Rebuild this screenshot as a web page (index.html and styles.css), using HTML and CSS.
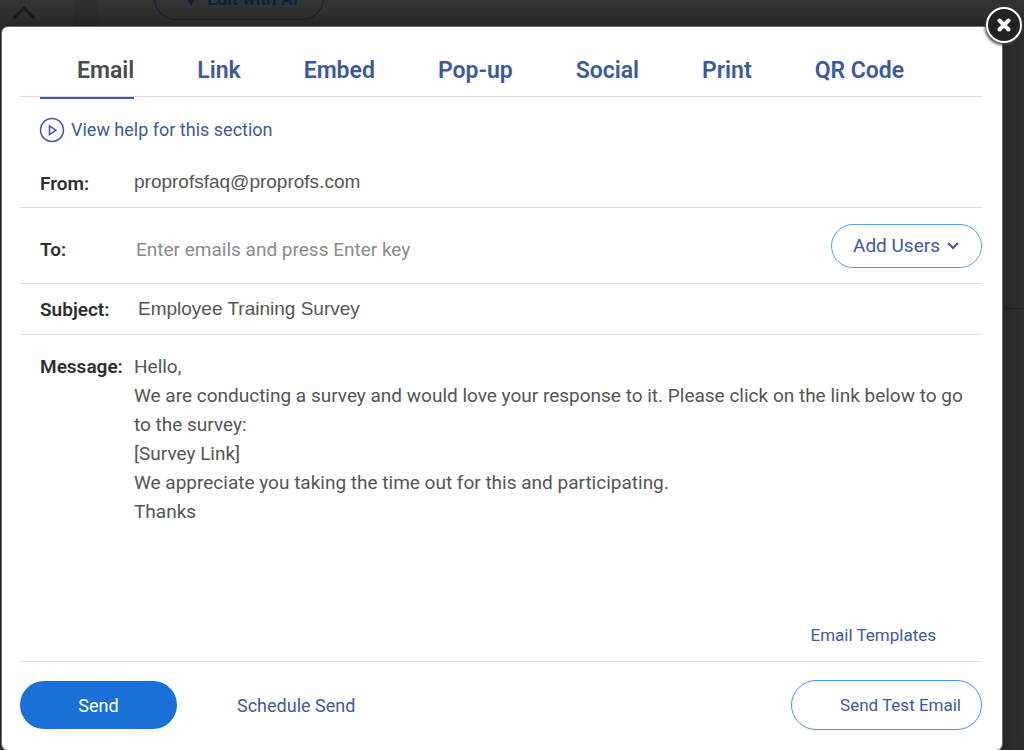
FILE: index.html
```html
<!DOCTYPE html>
<html lang="en">
<head>
  <meta charset="UTF-8" />
  <meta name="viewport" content="width=device-width, initial-scale=1" />
  <title>Share Survey</title>
  <link rel="stylesheet" href="styles.css">
</head>
<body>

  <!-- page behind the popup -->
  <div class="page">
    <svg class="collapse" viewBox="0 0 24 14" aria-hidden="true"><path d="M2 12 L12 2 L22 12" /></svg>
    <div class="page-panel">
      <button class="edit-ai" type="button">
        <svg viewBox="0 0 16 20" aria-hidden="true"><path d="M8 0 Q9.5 8 14 10 Q9.5 12 8 20 Q6.5 12 2 10 Q6.5 8 8 0Z" /></svg>
        Edit with AI
      </button>
      <hr class="page-line">
    </div>
  </div>

  <div class="overlay">
    <form class="modal">
      <button class="close" type="button" aria-label="Close">
        <svg viewBox="0 0 14 14" aria-hidden="true"><path d="M2.5 2.5 L11.5 11.5 M11.5 2.5 L2.5 11.5" /></svg>
      </button>

      <nav class="tabs">
        <a class="tab active" href="#email">Email</a>
        <a class="tab" href="#link">Link</a>
        <a class="tab" href="#embed">Embed</a>
        <a class="tab" href="#popup">Pop-up</a>
        <a class="tab" href="#social">Social</a>
        <a class="tab" href="#print">Print</a>
        <a class="tab" href="#qr">QR Code</a>
      </nav>

      <a class="help" href="#help">
        <svg viewBox="0 0 26 26" aria-hidden="true">
          <circle cx="13" cy="13" r="11.5" />
          <path d="M10.5 8.8 L17 13.2 L10.5 17.6 Z" />
        </svg>
        View help for this section
      </a>

      <div class="row row-from">
        <label for="from">From:</label>
        <input class="arial" id="from" type="text" value="proprofsfaq@proprofs.com">
      </div>

      <div class="row row-to">
        <label for="to">To:</label>
        <input id="to" type="text" placeholder="Enter emails and press Enter key">
        <button class="add-users" type="button">
          Add Users
          <svg viewBox="0 0 14 10" aria-hidden="true"><path d="M2 2 L7 7 L12 2" /></svg>
        </button>
      </div>

      <div class="row row-subject">
        <label for="subject">Subject:</label>
        <input class="arial" id="subject" type="text" value="Employee Training Survey">
      </div>

      <div class="row row-message">
        <label for="message">Message:</label>
        <div class="message-box">
          <textarea id="message">Hello,
We are conducting a survey and would love your response to it. Please click on the link below to go to the survey:
[Survey Link]
We appreciate you taking the time out for this and participating.
Thanks</textarea>
          <a class="templates" href="#templates">Email Templates</a>
        </div>
      </div>

      <div class="actions">
        <button class="send" type="submit">Send</button>
        <a class="schedule" href="#schedule">Schedule Send</a>
        <button class="test" type="button">Send Test Email</button>
      </div>
    </form>
  </div>

</body>
</html>
```

FILE: styles.css
```css
* {
  box-sizing: border-box;
}

body {
  margin: 0;
  background: #303030;
  font-family: Roboto, 'Liberation Sans', sans-serif;
  overflow: hidden;
}

a {
  color: #3d5a9e;
  text-decoration: none;
}

button {
  font-family: inherit;
  cursor: pointer;
}

svg {
  fill: none;
  stroke: currentColor;
}

/* page behind the popup */
.page {
  display: flex;
  height: 100vh;
  background: linear-gradient(#333 0, #2d2d2d 27px);
}

.collapse {
  width: 24px;
  height: 14px;
  margin: 6px 37px 0 12px;
  color: #1a1a1a;
  stroke-width: 3;
}

.page-panel {
  flex: 1;
  border-left: 24px solid rgba(0, 0, 0, 0.05);
}

.page-line {
  margin: 288px 0 0;
  border: 0;
  border-top: 1px solid #222;
}

.edit-ai {
  display: flex;
  align-items: center;
  gap: 8px;
  height: 44px;
  margin: -24px 0 0 57px;
  padding: 0 25px 0 28px;
  border: 1px solid #10203c;
  border-radius: 22px;
  background: none;
  color: #10203c;
  font-size: 18px;
  font-weight: 600;
}

.edit-ai svg {
  width: 16px;
  height: 20px;
  fill: currentColor;
  stroke: none;
}

.overlay {
  position: absolute;
  inset: 0;
  padding: 27px 22px 0 2px;
}

.modal {
  position: relative;
  padding: 0 20px 20px 18px;
  background: #fff;
  border-radius: 6px;
  box-shadow: 0 0 0 1px #6b6b6b, 0 0 16px #1c1c1c;
}

.close {
  position: absolute;
  top: -20px;
  right: -20px;
  display: grid;
  place-items: center;
  width: 36px;
  height: 36px;
  padding: 0;
  border: 2px solid #fff;
  border-radius: 50%;
  background: #222;
  color: #fff;
  box-shadow: -1px 2px 3px #444;
}

.close svg {
  width: 14px;
  height: 14px;
  stroke-width: 4;
  stroke-linecap: round;
}

.tabs {
  display: flex;
  gap: 26px;
  height: 70px;
  padding: 0 20px;
  border-bottom: 1px solid #dedede;
}

.tab {
  height: 72px;
  padding: 28px 0 0 37px;
  font-size: 23px;
  line-height: 31px;
  font-weight: 600;
  white-space: nowrap;
}

.tab.active {
  border-bottom: 2px solid #3d5a9e;
  color: #4c4c4c;
}

.help {
  display: flex;
  align-items: center;
  gap: 6px;
  width: fit-content;
  margin: 20px 0 0 19px;
  font-size: 18px;
  line-height: 26px;
}

.help svg {
  width: 26px;
  height: 26px;
  stroke-width: 1.5;
}

/* form rows */
.row {
  display: flex;
  align-items: center;
  padding-left: 20px;
  border-bottom: 1px solid #dedede;
}

.row label {
  flex: 0 0 94px;
  color: #2e2e2e;
  font-size: 19px;
  font-weight: 600;
}

.row input,
.row textarea {
  flex: 1;
  min-width: 0;
  padding: 0;
  border: 0;
  outline: 0;
  background: none;
  color: #555;
  font-family: inherit;
  font-size: 19px;
}

.row input::placeholder {
  color: #8a8a8a;
}

.row .arial {
  font-family: 'Liberation Sans', Arial, sans-serif;
}

.row-from {
  height: 65px;
  padding-top: 16px;
}

.row-from input {
  padding-bottom: 2px;
}

.row-to {
  height: 76px;
}

.row-to input {
  padding: 8px 2px 0;
}

.row-to label {
  padding-top: 8px;
}

.add-users {
  display: flex;
  align-items: center;
  justify-content: center;
  gap: 6px;
  width: 151px;
  height: 44px;
  border: 1px solid #5b9fdc;
  border-radius: 22px;
  background: #fff;
  color: #3d5a9e;
  font-size: 19px;
}

.add-users svg {
  width: 14px;
  height: 10px;
  stroke-width: 2;
}

.row-subject {
  height: 51px;
}

.row-subject input {
  padding-left: 4px;
}

.row-message {
  align-items: flex-start;
  padding-top: 17px;
}

.row-message label {
  line-height: 29px;
}

.message-box {
  display: flex;
  flex: 1;
  flex-direction: column;
}

.row-message textarea {
  flex: 0 0 266px;
  line-height: 29px;
  resize: none;
}

.templates {
  align-self: flex-end;
  margin: 0 46px 8px 0;
  font-size: 17px;
  line-height: 35px;
}

/* bottom buttons */
.actions {
  display: flex;
  align-items: center;
  padding-top: 18px;
}

.send,
.test {
  height: 50px;
  border-radius: 25px;
  font-size: 17px;
}

.send {
  width: 157px;
  height: 48px;
  border: 0;
  background: #1a70d6;
  color: #fff;
  font-size: 18px;
}

.schedule {
  margin-left: 60px;
  font-size: 18px;
}

.test {
  width: 191px;
  margin-left: auto;
  padding: 0 20px;
  border: 1px solid #4a8fe0;
  background: #fff;
  color: #3d5a9e;
  text-align: right;
}
```
